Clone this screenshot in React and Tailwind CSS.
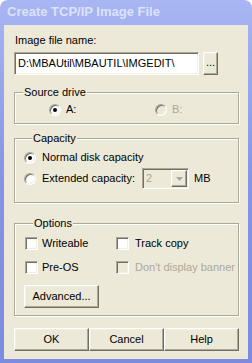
import React from 'react';

const sunken =
  'border border-t-[#ACA899] border-l-[#ACA899] border-b-white border-r-white shadow-[inset_1px_1px_0_#716F64,inset_-1px_-1px_0_#F1EFE2]';
const raised =
  'bg-[#ECE9D8] border border-t-white border-l-white border-b-[#716F64] border-r-[#716F64] shadow-[inset_-1px_-1px_0_#ACA899,inset_1px_1px_0_#F1EFE2]';

function Btn({ className = '', children }) {
  return (
    <button type="button" className={`flex items-center justify-center h-[23px] text-black ${raised} ${className}`}>
      {children}
    </button>
  );
}

function Radio({ checked, disabled }) {
  return (
    <span
      className={`flex w-[12px] h-[12px] shrink-0 items-center justify-center rounded-full ${sunken} ${disabled ? 'bg-[#ECE9D8]' : 'bg-white'}`}
    >
      {checked && <span className="w-[4px] h-[4px] rounded-full bg-black" />}
    </span>
  );
}

function Check({ disabled }) {
  return <span className={`block w-[13px] h-[13px] shrink-0 ${sunken} ${disabled ? 'bg-[#ECE9D8]' : 'bg-white'}`} />;
}

function Group({ title, className = '', children }) {
  return (
    <fieldset className={`border border-[#ACA899] shadow-[inset_1px_1px_0_#fff,1px_1px_0_#fff] ${className}`}>
      <legend className="ml-[8px] px-[1px] bg-[#ECE9D8] leading-[13px]">{title}</legend>
      {children}
    </fieldset>
  );
}

export default function App() {
  return (
    <div className="w-[252px] h-[363px] bg-white font-['Liberation_Sans',Arial,sans-serif] text-[11px] text-black">
      <div className="flex flex-col h-full rounded-t-[8px] bg-gradient-to-b from-[#A8B6F2] via-[#8494E6] to-[#7A8BE0]">
        <div className="flex items-center h-[25px] pl-[7px] pb-[1px] text-[13px] font-bold text-[#DCE3FA]">
          Create TCP/IP Image File
        </div>
        <div className="flex-1 flex flex-col mx-[4px] mb-[4px] bg-[#ECE9D8] pt-[9px] pl-[10px] pr-[9px] leading-[13px]">
          <div className="pl-[1px]">Image file name:</div>
          <div className="flex mt-[5px] gap-[4px]">
            <div className={`flex items-center w-[185px] h-[23px] pl-[3px] bg-white ${sunken}`}>
              {'D:\\MBAUtil\\MBAUTIL\\IMGEDIT\\'}
            </div>
            <Btn className="w-[15px] pb-[2px]">...</Btn>
          </div>

          <Group title="Source drive" className="mt-[11px] pb-[7px]">
            <div className="flex items-center mt-[4px] h-[13px]">
              <div className="flex items-center gap-[5px] ml-[34px] w-[106px]">
                <Radio checked />
                <span>A:</span>
              </div>
              <div className="flex items-center gap-[5px] text-[#ACA899]">
                <Radio disabled />
                <span>B:</span>
              </div>
            </div>
          </Group>

          <Group title="Capacity" className="mt-[8px] pb-[13px] pl-[9px]">
            <div className="flex items-center gap-[6px] mt-[6px] h-[13px]">
              <Radio checked />
              <span>Normal disk capacity</span>
            </div>
            <div className="flex items-center mt-[4px] h-[21px]">
              <div className="flex items-center gap-[6px] w-[118px]">
                <Radio />
                <span>Extended capacity:</span>
              </div>
              <div className={`flex items-center w-[47px] h-[21px] bg-[#ECE9D8] ${sunken}`}>
                <span className="flex-1 pl-[3px] text-[#ACA899]">2</span>
                <div className={`flex items-center justify-center w-[16px] h-[17px] mr-[1px] ${raised}`}>
                  <svg width="7" height="4" viewBox="0 0 7 4">
                    <path d="M0 0h7L3.5 4z" fill="#ACA899" />
                  </svg>
                </div>
              </div>
              <span className="ml-[5px]">MB</span>
            </div>
          </Group>

          <Group title="Options" className="mt-[14px] pb-[7px] pl-[10px]">
            <div className="grid grid-cols-[91px_1fr] mt-[7px] gap-y-[11px]">
              <div className="flex items-center gap-[4px] h-[13px]">
                <Check />
                <span>Writeable</span>
              </div>
              <div className="flex items-center gap-[6px] h-[13px]">
                <Check />
                <span>Track copy</span>
              </div>
              <div className="flex items-center gap-[4px] h-[13px]">
                <Check />
                <span>Pre-OS</span>
              </div>
              <div className="flex items-center gap-[6px] h-[13px] text-[#ACA899]">
                <Check disabled />
                <span>Don't display banner</span>
              </div>
            </div>
            <Btn className="w-[75px] mt-[11px] -ml-[1px]">Advanced...</Btn>
          </Group>

          <div className="flex mt-[12px]">
            <Btn className="w-[75px]">OK</Btn>
            <Btn className="w-[75px]">Cancel</Btn>
            <Btn className="w-[75px]">Help</Btn>
          </div>
        </div>
      </div>
    </div>
  );
}
